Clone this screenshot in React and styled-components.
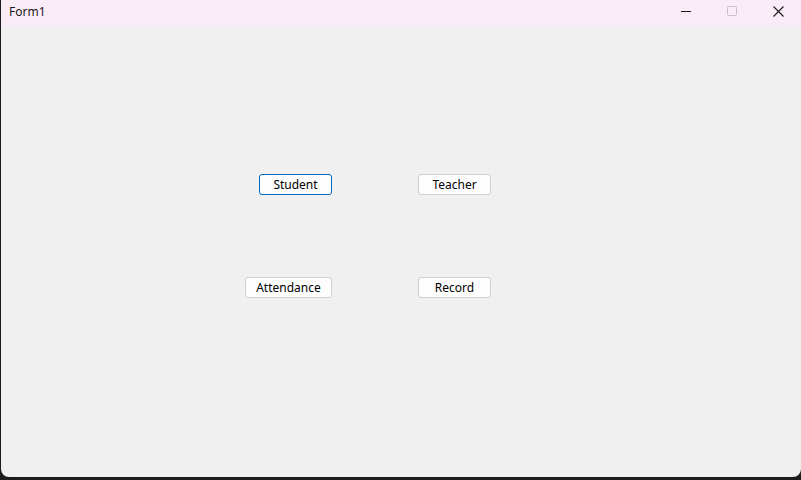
import React from "react";
import styled, { createGlobalStyle } from "styled-components";

const GlobalStyle = createGlobalStyle`
  html, body {
    margin: 0;
    padding: 0;
    background: #1c1c1c;
    overflow: hidden;
  }
  body {
    font-family: "Noto Sans", "Open Sans", sans-serif;
  }
`;

const Screen = styled.div`
  width: 801px;
  height: 480px;
  background: #1c1c1c;
  display: flex;
  flex-direction: column;
`;

const Window = styled.div`
  width: 800px;
  height: 477px;
  margin-left: 1px;
  background: #f0f0f0;
  border-radius: 0 0 8px 8px;
  display: flex;
  flex-direction: column;
  overflow: hidden;
`;

const TitleBar = styled.div`
  height: 27px;
  background: #f9ecf7;
  display: flex;
  align-items: center;
  justify-content: space-between;
  flex-shrink: 0;
`;

const Title = styled.span`
  margin-left: 8px;
  font-size: 12px;
  color: #1a1a1a;
  padding-bottom: 5px;
`;

const Controls = styled.div`
  display: flex;
  height: 100%;
`;

const ControlBtn = styled.div`
  width: 46px;
  height: 100%;
  display: flex;
  align-items: center;
  justify-content: center;
  padding-bottom: 5px;
  box-sizing: border-box;
`;

const Body = styled.div`
  flex: 1;
  display: grid;
  grid-template-columns: 87px 73px;
  grid-auto-rows: 21px;
  column-gap: 86px;
  row-gap: 82px;
  padding: 147px 0 0 244px;
  align-content: start;
`;

const Button = styled.button`
  justify-self: end;
  width: ${(p) => p.$w}px;
  height: 21px;
  padding: 0;
  background: #fdfdfd;
  border: 1px solid ${(p) => (p.$focused ? "#0067c0" : "#d0d0d0")};
  border-radius: 3px;
  font-family: "Noto Sans", "Open Sans", sans-serif;
  font-size: 12px;
  color: #000;
  line-height: 19px;
  box-sizing: border-box;
`;

const App = () => {
  return (
    <>
      <GlobalStyle />
      <Screen>
        <Window>
          <TitleBar>
            <Title>Form1</Title>
            <Controls>
              <ControlBtn>
                <svg width="10" height="10" viewBox="0 0 10 10">
                  <path d="M0 5.5h10" stroke="#1a1a1a" strokeWidth="1" />
                </svg>
              </ControlBtn>
              <ControlBtn>
                <svg width="10" height="10" viewBox="0 0 10 10">
                  <rect x="0.5" y="0.5" width="9" height="9" rx="1" fill="none" stroke="#c8c0c6" strokeWidth="1" />
                </svg>
              </ControlBtn>
              <ControlBtn>
                <svg width="11" height="11" viewBox="0 0 11 11">
                  <path d="M0.5 0.5l10 10M10.5 0.5l-10 10" stroke="#1a1a1a" strokeWidth="1.1" />
                </svg>
              </ControlBtn>
            </Controls>
          </TitleBar>
          <Body>
            <Button $w={73} $focused>Student</Button>
            <Button $w={73}>Teacher</Button>
            <Button $w={87}>Attendance</Button>
            <Button $w={73}>Record</Button>
          </Body>
        </Window>
      </Screen>
    </>
  );
};

export default App;
